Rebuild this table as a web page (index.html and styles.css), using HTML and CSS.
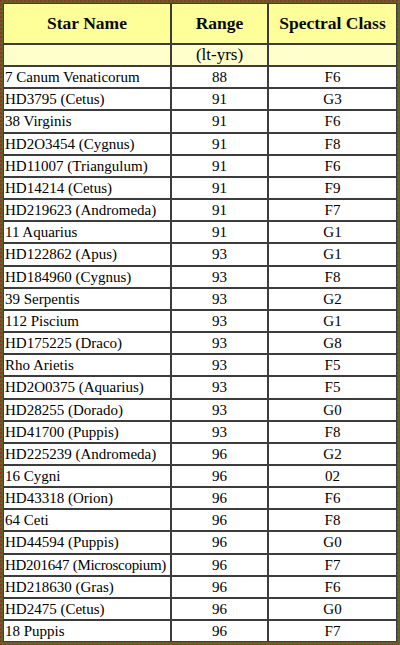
FILE: index.html
```html
<!DOCTYPE html>
<html>
<head>
<meta charset="utf-8">
<link rel="stylesheet" href="styles.css">
</head>
<body>
<table class="stars">
<colgroup><col class="c1"><col class="c2"><col class="c3"></colgroup>
<tr class="head"><th>Star Name</th><th>Range</th><th>Spectral Class</th></tr>
<tr class="sub"><td></td><td class="ctr">(lt-yrs)</td><td></td></tr>
<tr><td>7 Canum Venaticorum</td><td class="ctr">88</td><td class="ctr">F6</td></tr>
<tr><td>HD3795 (Cetus)</td><td class="ctr">91</td><td class="ctr">G3</td></tr>
<tr><td>38 Virginis</td><td class="ctr">91</td><td class="ctr">F6</td></tr>
<tr><td>HD2O3454 (Cygnus)</td><td class="ctr">91</td><td class="ctr">F8</td></tr>
<tr><td>HD11007 (Triangulum)</td><td class="ctr">91</td><td class="ctr">F6</td></tr>
<tr><td>HD14214 (Cetus)</td><td class="ctr">91</td><td class="ctr">F9</td></tr>
<tr><td>HD219623 (Andromeda)</td><td class="ctr">91</td><td class="ctr">F7</td></tr>
<tr><td>11 Aquarius</td><td class="ctr">91</td><td class="ctr">G1</td></tr>
<tr><td>HD122862 (Apus)</td><td class="ctr">93</td><td class="ctr">G1</td></tr>
<tr><td>HD184960 (Cygnus)</td><td class="ctr">93</td><td class="ctr">F8</td></tr>
<tr><td>39 Serpentis</td><td class="ctr">93</td><td class="ctr">G2</td></tr>
<tr><td>112 Piscium</td><td class="ctr">93</td><td class="ctr">G1</td></tr>
<tr><td>HD175225 (Draco)</td><td class="ctr">93</td><td class="ctr">G8</td></tr>
<tr><td>Rho Arietis</td><td class="ctr">93</td><td class="ctr">F5</td></tr>
<tr><td>HD2O0375 (Aquarius)</td><td class="ctr">93</td><td class="ctr">F5</td></tr>
<tr><td>HD28255 (Dorado)</td><td class="ctr">93</td><td class="ctr">G0</td></tr>
<tr><td>HD41700 (Puppis)</td><td class="ctr">93</td><td class="ctr">F8</td></tr>
<tr><td>HD225239 (Andromeda)</td><td class="ctr">96</td><td class="ctr">G2</td></tr>
<tr><td>16 Cygni</td><td class="ctr">96</td><td class="ctr">02</td></tr>
<tr><td>HD43318 (Orion)</td><td class="ctr">96</td><td class="ctr">F6</td></tr>
<tr><td>64 Ceti</td><td class="ctr">96</td><td class="ctr">F8</td></tr>
<tr><td>HD44594 (Puppis)</td><td class="ctr">96</td><td class="ctr">G0</td></tr>
<tr><td class="tight">HD201647 (Microscopium)</td><td class="ctr">96</td><td class="ctr">F7</td></tr>
<tr><td>HD218630 (Gras)</td><td class="ctr">96</td><td class="ctr">F6</td></tr>
<tr><td>HD2475 (Cetus)</td><td class="ctr">96</td><td class="ctr">G0</td></tr>
<tr><td>18 Puppis</td><td class="ctr">96</td><td class="ctr">F7</td></tr>
</table>
</body>
</html>
```
FILE: styles.css
```css
html, body {
  margin: 0;
  padding: 0;
}
body {
  background-color: #6f5a2b;
  background-image: radial-gradient(circle at 1px 1px, #8a3a22 0.8px, transparent 1px),
                    radial-gradient(circle at 3px 2px, #4f6a2a 0.8px, transparent 1px);
  background-size: 4px 4px, 5px 4px;
  padding: 3px;
  width: 394px;
  height: 639px;
  font-family: "Liberation Serif", "Times New Roman", serif;
  color: #000;
}
.stars {
  border-collapse: separate;
  border-spacing: 0;
  table-layout: fixed;
  width: 394px;
  background: #fff;
}
.c1 { width: 168px; }
.c2 { width: 97px; }
.c3 { width: 129px; }
.stars th,
.stars td {
  border: 1px solid #3c3c3c;
  padding: 0 0 0 1px;
  font-size: 15px;
  line-height: 20.15px;
  height: 20.15px;
  white-space: nowrap;
  vertical-align: middle;
  text-align: left;
}
.stars .tight {
  letter-spacing: -0.3px;
}
.stars .ctr {
  text-align: center;
  padding: 0;
}
.head th {
  background: #ffff99;
  font-size: 17.5px;
  font-weight: bold;
  text-align: center;
  height: 39px;
  line-height: 39px;
  padding: 0;
  color: #0a0a0a;
}
.sub td {
  background: #ffffcc;
  font-size: 17px;
}
```
